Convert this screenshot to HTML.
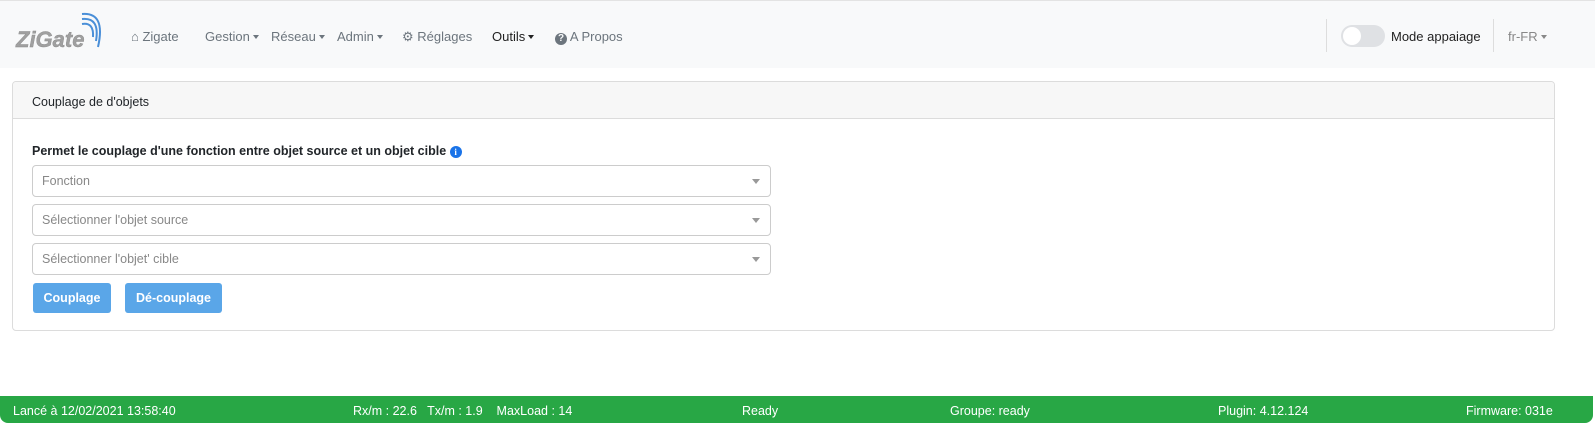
<!DOCTYPE html><html><head><meta charset="utf-8"><style>
*{box-sizing:border-box;margin:0;padding:0}
body{width:1595px;height:423px;overflow:hidden;background:#fff;font-family:"Liberation Sans",sans-serif;font-size:13px;color:#212529;position:relative}
.nav{position:absolute;left:0;top:0;width:1595px;height:68px;background:#f8f9fa;border-top:1px solid #e3e3e3}
.ni{position:absolute;top:28px;font-size:13px;color:#6c757d;white-space:nowrap}
.car{display:inline-block;border-top:4px solid currentColor;border-left:3px solid transparent;border-right:3px solid transparent;vertical-align:2px;margin-left:3px}
.card{position:absolute;left:12px;top:81px;width:1543px;height:250px;border:1px solid #dcdcdc;border-radius:4px;overflow:hidden}
.ch{height:37px;background:#f7f7f7;border-bottom:1px solid #dcdcdc;padding:13px 19px;font-size:12.5px}
.sel{position:absolute;left:19px;width:739px;height:32px;border:1px solid #ccc;border-radius:4px;color:#888;font-size:12.5px;padding:8px 9px}
.sel:after{content:"";position:absolute;right:10px;top:13px;border-top:5px solid #999;border-left:4px solid transparent;border-right:4px solid transparent}
.btn{position:absolute;top:201px;height:30px;background:#5aa6e8;color:#fff;border-radius:3px;font-size:12.5px;font-weight:bold;padding:8px 0;text-align:center}
.ft{position:absolute;left:0;top:396px;width:1593px;height:27px;background:#28a745;border-radius:0 0 8px 8px;color:#fff;font-size:12.5px}
.ft span{position:absolute;top:8px;white-space:nowrap}
</style></head><body>
<div class="nav">
<svg style="position:absolute;left:14px;top:10px" width="92" height="40" viewBox="0 0 92 40">
<text x="2" y="36" font-family="Liberation Sans" font-weight="bold" font-style="italic" font-size="22" fill="#a0a0a0" stroke="#8a8a8a" stroke-width="0.4">ZiGate</text>
<path d="M68 13 Q80 11 79 26" stroke="#4a8fd8" stroke-width="2" fill="none"/>
<path d="M68 8 Q86 6 82 30" stroke="#4a8fd8" stroke-width="2" fill="none"/>
<path d="M68 3 Q92 1 84 36" stroke="#4a8fd8" stroke-width="2" fill="none"/>
</svg>
<div class="ni" style="left:131px">&#8962; Zigate</div>
<div class="ni" style="left:205px">Gestion<span class="car"></span></div>
<div class="ni" style="left:271px">Réseau<span class="car"></span></div>
<div class="ni" style="left:337px">Admin<span class="car"></span></div>
<div class="ni" style="left:402px">&#9881; Réglages</div>
<div class="ni" style="left:492px;color:#222">Outils<span class="car"></span></div>
<div class="ni" style="left:555px"><span style="display:inline-block;width:12px;height:12px;border-radius:50%;background:#6c757d;color:#f8f9fa;font-size:10px;text-align:center;line-height:12px;font-weight:bold">?</span> A Propos</div>
<div style="position:absolute;left:1326px;top:18px;width:1px;height:33px;background:#ddd"></div>
<div style="position:absolute;left:1341px;top:24px;width:44px;height:22px;border-radius:11px;background:#dfe1e4"><div style="position:absolute;left:2px;top:2px;width:18px;height:18px;border-radius:50%;background:#fff"></div></div>
<div class="ni" style="left:1391px;color:#222">Mode appaiage</div>
<div style="position:absolute;left:1493px;top:18px;width:1px;height:33px;background:#ddd"></div>
<div class="ni" style="left:1508px;color:#888">fr-FR<span class="car"></span></div>
</div>
<div class="card">
<div class="ch">Couplage de d'objets</div>
<div style="position:absolute;left:19px;top:62px;font-weight:bold;font-size:12.5px">Permet le couplage d'une fonction entre objet source et un objet cible <span style="display:inline-block;width:12px;height:12px;border-radius:50%;background:#1a73e8;color:#fff;font-size:9px;text-align:center;line-height:12px;font-family:'Liberation Serif'">i</span></div>
<div class="sel" style="top:83px">Fonction</div>
<div class="sel" style="top:122px">Sélectionner l'objet source</div>
<div class="sel" style="top:161px">Sélectionner l'objet' cible</div>
<div class="btn" style="left:20px;width:78px">Couplage</div>
<div class="btn" style="left:112px;width:97px">Dé-couplage</div>
</div>
<div class="ft">
<span style="left:13px">Lancé à 12/02/2021 13:58:40</span>
<span style="left:353px">Rx/m : 22.6&nbsp;&nbsp; Tx/m : 1.9&nbsp;&nbsp;&nbsp; MaxLoad : 14</span>
<span style="left:742px">Ready</span>
<span style="left:950px">Groupe: ready</span>
<span style="left:1218px">Plugin: 4.12.124</span>
<span style="left:1466px">Firmware: 031e</span>
</div>
</body></html>
